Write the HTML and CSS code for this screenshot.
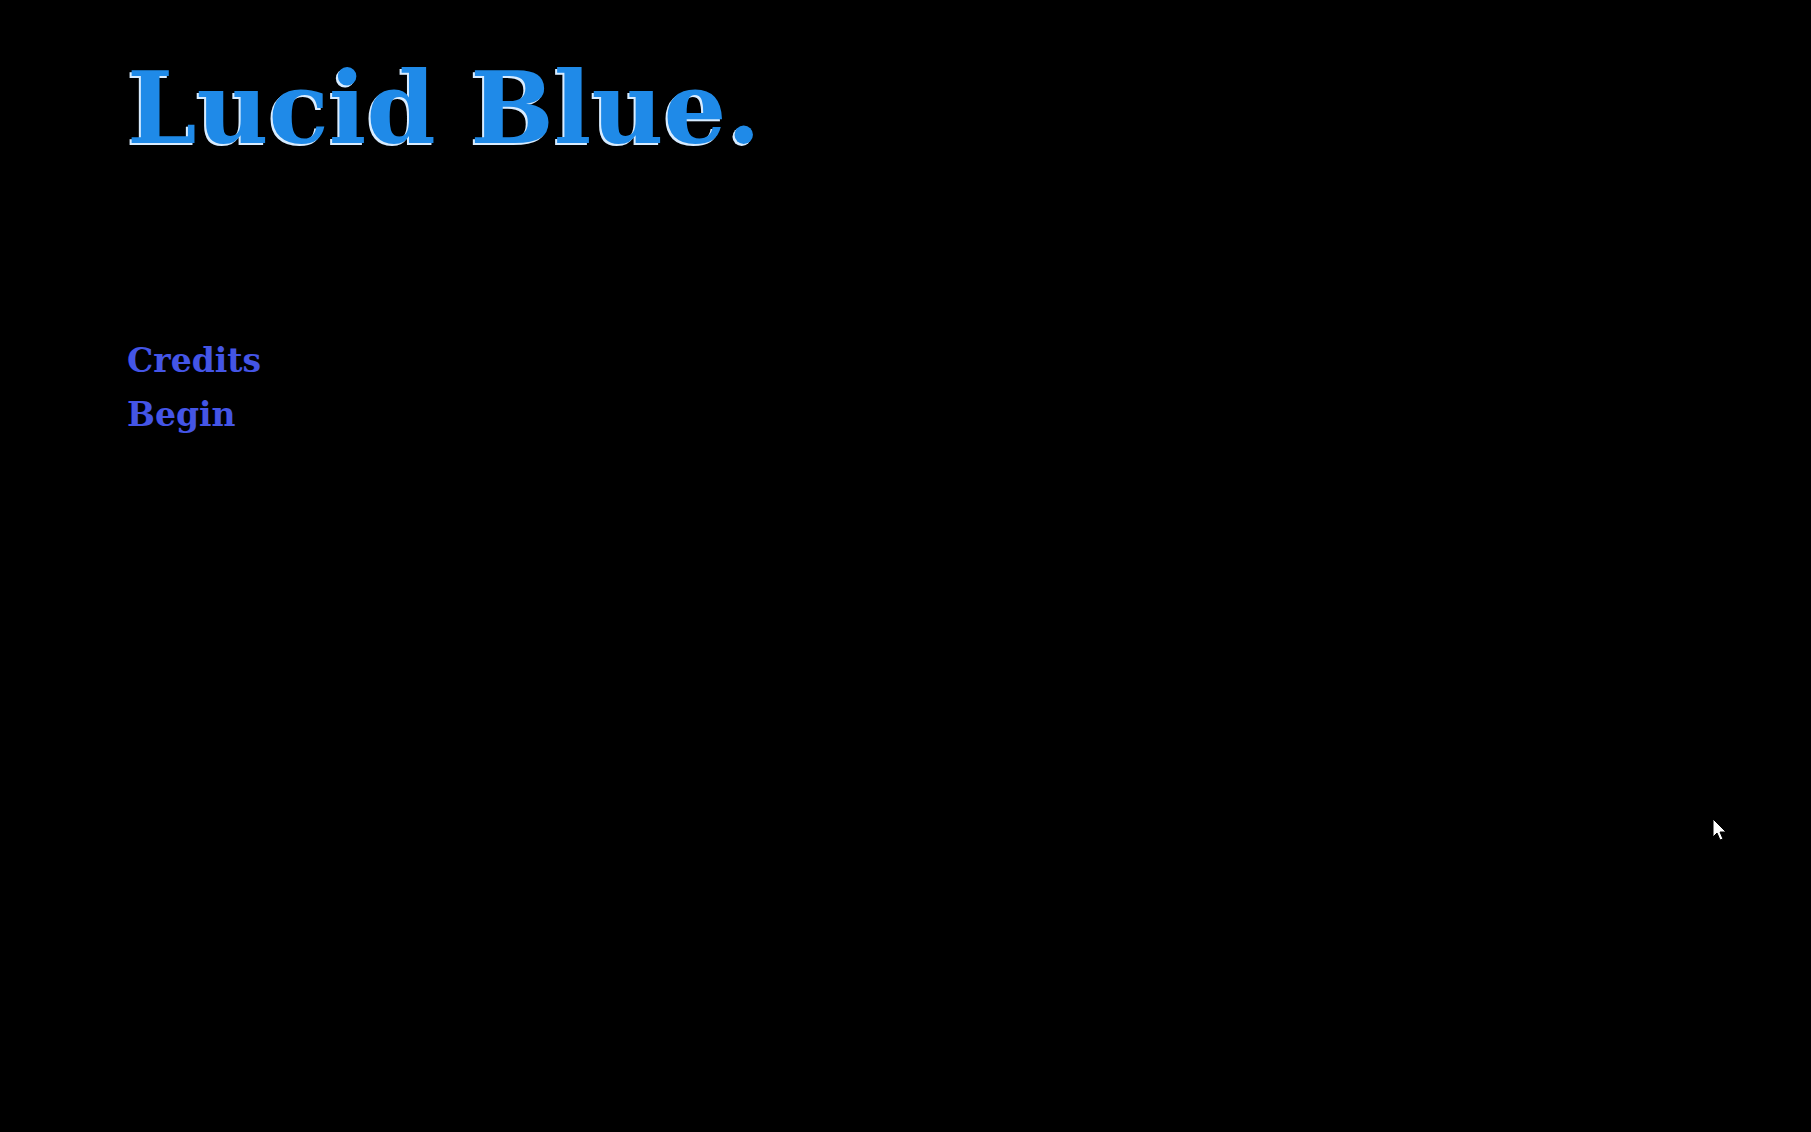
FILE: index.html
```html
<!DOCTYPE html>
<html>
<head>
<meta charset="utf-8">
<title>Lucid Blue.</title>
<link rel="stylesheet" href="styles.css">
</head>
<body>
<main class="screen">
  <h1 class="title">Lucid Blue.</h1>
  <nav class="menu">
    <a class="menu-item" href="#">Credits</a>
    <a class="menu-item" href="#">Begin</a>
  </nav>
</main>
<svg class="cursor" width="16" height="26" viewBox="0 0 16 26"><path d="M1 1 L1 19 L5 15 L8 22 L11 21 L8 14 L14 14 Z" fill="#fff" stroke="#000" stroke-width="1"/></svg>
</body>
</html>
```
FILE: styles.css
```css
html, body {
  margin: 0;
  padding: 0;
  background: #000;
  height: 100%;
}
.screen {
  padding: 48px 0 0 127px;
  display: flex;
  flex-direction: column;
}
.title {
  margin: 0;
  font-family: "DejaVu Serif", serif;
  font-weight: bold;
  font-size: 99px;
  line-height: 120px;
  color: #1f8ae8;
  text-shadow: -2px 2px 0 #d8ecff;
}
.menu {
  margin-top: 166px;
  display: flex;
  flex-direction: column;
}
.menu-item {
  font-family: "DejaVu Serif", serif;
  font-weight: bold;
  font-size: 33px;
  line-height: 54px;
  color: #4455e6;
  text-decoration: none;
}
.cursor {
  position: absolute;
  left: 1712px;
  top: 818px;
}
```
